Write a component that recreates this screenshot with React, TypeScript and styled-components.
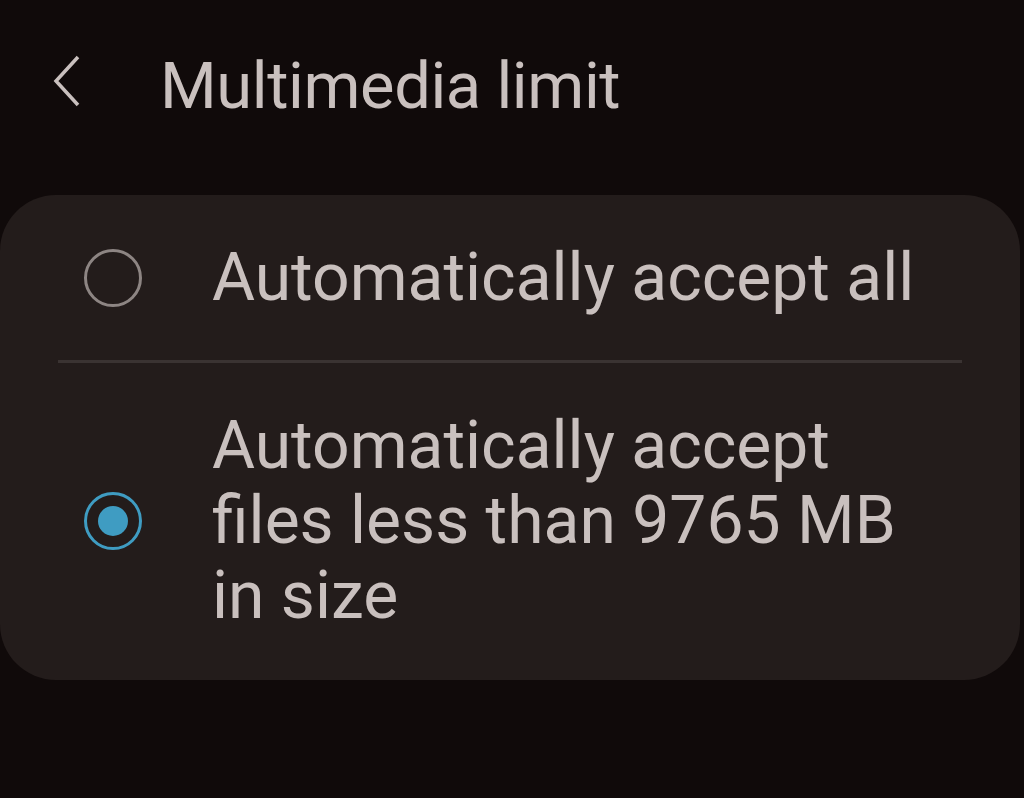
import styled, { createGlobalStyle } from 'styled-components';

const GlobalStyle = createGlobalStyle`
  html, body {
    margin: 0;
    padding: 0;
    background: #100a0a;
  }
  body {
    font-family: Roboto, "Noto Sans", sans-serif;
  }
`;

const options = [
  { id: 'all', label: 'Automatically accept all', checked: false },
  { id: 'limit', label: 'Automatically accept files less than 9765 MB in size', checked: true },
];

const App = () => {
  return (
    <Page>
      <GlobalStyle />
      <Header>
        <BackButton aria-label="Back">
          <svg width="30" height="52" viewBox="0 0 30 52">
            <path d="M25 2 L3 26 L25 50" fill="none" stroke="#c9c0be" strokeWidth="3.5" />
          </svg>
        </BackButton>
        <Title>Multimedia limit</Title>
      </Header>
      <Card>
        {options.map((opt, i) => (
          <div key={opt.id}>
            {i > 0 && <Divider />}
            <Row>
              <Radio checked={opt.checked}>{opt.checked && <Dot />}</Radio>
              <Label>{opt.label}</Label>
            </Row>
          </div>
        ))}
      </Card>
    </Page>
  );
};

const Page = styled.div`
  width: 1024px;
  height: 798px;
  background: #100a0a;
  overflow: hidden;
`;

const Header = styled.div`
  display: flex;
  align-items: center;
  height: 172px;
  padding-left: 53px;
  box-sizing: border-box;
`;

const BackButton = styled.div`
  width: 107px;
  display: flex;
  align-items: center;
  margin-top: -10px;
`;

const Title = styled.div`
  color: #c9c0be;
  font-size: 65px;
  letter-spacing: -0.4px;
`;

const Card = styled.div`
  margin-top: 23px;
  width: 1020px;
  background: #231c1b;
  border-radius: 56px;
  padding: 0 0 2px;
  box-sizing: border-box;
`;

const Row = styled.div`
  display: flex;
  align-items: center;
  padding: 45px 40px 45px 84px;
`;

const Radio = styled.div<{ checked: boolean }>`
  flex: none;
  width: 58px;
  height: 58px;
  box-sizing: border-box;
  border-radius: 50%;
  border: 3px solid ${(p) => (p.checked ? '#3f9cc2' : '#8d8583')};
  display: flex;
  align-items: center;
  justify-content: center;
  margin-right: 70px;
`;

const Dot = styled.div`
  width: 30px;
  height: 30px;
  border-radius: 50%;
  background: #3f9cc2;
`;

const Label = styled.div`
  color: #c9c0be;
  font-size: 66px;
  line-height: 75px;
  max-width: 720px;
`;

const Divider = styled.div`
  height: 3px;
  background: #3a3332;
  margin: 0 58px;
`;

export default App;
